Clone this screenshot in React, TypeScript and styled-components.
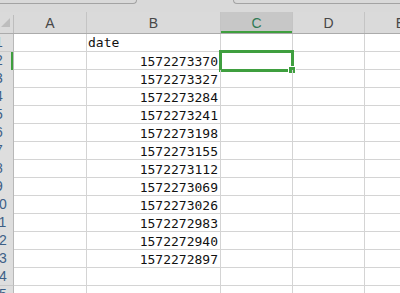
import React from "react";
import styled, { createGlobalStyle } from "styled-components";

const GlobalStyle = createGlobalStyle`
  html, body {
    margin: 0;
    padding: 0;
    width: 400px;
    height: 293px;
    overflow: hidden;
    background: #ffffff;
  }
`;

const GREEN = "#3f9f3f";
const COLS = "14px 73px 134px 72px 72px 72px";

const Sheet = styled.div`
  width: 400px;
  height: 293px;
  overflow: hidden;
  background: #fff;
`;

const TopBar = styled.div`
  height: 12px;
  display: flex;
  align-items: flex-start;
  background: #d9d9d9;
`;

const FormulaBox = styled.div<{ side: "left" | "right" }>`
  box-sizing: border-box;
  height: 4px;
  border-bottom: 1px solid #a3a3a3;
  ${(p) =>
    p.side === "left"
      ? `width: 137px; border-right: 1px solid #a3a3a3; border-bottom-right-radius: 5px;`
      : `flex: 1; margin-left: 96px; border-left: 1px solid #a3a3a3; border-bottom-left-radius: 5px;`}
`;

const HeaderRow = styled.div`
  display: grid;
  grid-template-columns: ${COLS};
  width: 437px;
  height: 22px;
  box-sizing: border-box;
  border-bottom: 1px solid #ababab;
  background: #dadada;
`;

const Corner = styled.div`
  position: relative;
  box-sizing: border-box;
  border-right: 1px solid #bdbdbd;
  margin-top: 3px;
`;

const CornerTriangle = styled.div`
  position: absolute;
  left: 1px;
  top: 3px;
  width: 0;
  height: 0;
  border-left: 9px solid transparent;
  border-bottom: 9px solid #bdbdbd;
`;

const ColHead = styled.div<{ active?: boolean }>`
  box-sizing: border-box;
  display: flex;
  align-items: center;
  justify-content: center;
  border-right: 1px solid #c4c4c4;
  font-family: "Liberation Sans", Arial, sans-serif;
  font-size: 14px;
  color: ${(p) => (p.active ? "#2f7a55" : "#474747")};
  background: ${(p) => (p.active ? "#c7c7c7" : "transparent")};
  box-shadow: ${(p) => (p.active ? `inset 0 -2px 0 ${GREEN}` : "none")};
  padding-top: 1px;
`;

const Row = styled.div`
  display: grid;
  grid-template-columns: ${COLS};
  width: 437px;
  height: 18px;
  box-sizing: border-box;
  border-bottom: 1px solid #d4d4d4;
`;

const RowHead = styled.div<{ active?: boolean }>`
  box-sizing: border-box;
  display: flex;
  justify-content: flex-end;
  overflow: hidden;
  background: #dedede;
  border-right: 1px solid #b8b8b8;
  box-shadow: ${(p) => (p.active ? `inset -2px 0 0 ${GREEN}` : "none")};
  margin-bottom: -1px;
  border-bottom: 1px solid #c9c9c9;
`;

const RowNumber = styled.span`
  flex: 0 0 28px;
  text-align: center;
  font-family: "Liberation Sans", Arial, sans-serif;
  font-size: 14px;
  line-height: 17px;
  color: #3d5f86;
`;

const Cell = styled.div<{ align?: "left" | "right" }>`
  position: relative;
  box-sizing: border-box;
  border-right: 1px solid #d4d4d4;
  font-family: "DejaVu Sans Mono", "Liberation Mono", monospace;
  font-size: 13px;
  line-height: 17px;
  color: #111;
  white-space: nowrap;
  text-align: ${(p) => p.align ?? "left"};
  padding: ${(p) => (p.align === "right" ? "1px 2px 0 0" : "0 0 0 1px")};
`;

const Selection = styled.div`
  position: absolute;
  left: -2px;
  top: -2px;
  right: -2px;
  bottom: -2px;
  border: 3px solid ${GREEN};
  pointer-events: none;
`;

const FillHandle = styled.div`
  position: absolute;
  right: -5px;
  bottom: -5px;
  width: 6px;
  height: 6px;
  background: ${GREEN};
  border: 1px solid #fff;
`;

const values = [
  1572273370, 1572273327, 1572273284, 1572273241, 1572273198, 1572273155,
  1572273112, 1572273069, 1572273026, 1572272983, 1572272940, 1572272897,
];

const letters = ["A", "B", "C", "D", "E"];

export default function App() {
  const rows = Array.from({ length: 15 }, (_, i) => i + 1);
  return (
    <Sheet>
      <GlobalStyle />
      <TopBar>
        <FormulaBox side="left" />
        <FormulaBox side="right" />
      </TopBar>
      <HeaderRow>
        <Corner>
          <CornerTriangle />
        </Corner>
        {letters.map((l) => (
          <ColHead key={l} active={l === "C"}>
            {l}
          </ColHead>
        ))}
      </HeaderRow>
      {rows.map((r) => {
        const b = r === 1 ? "date" : values[r - 2];
        return (
          <Row key={r}>
            <RowHead active={r === 2}>
              <RowNumber>{r}</RowNumber>
            </RowHead>
            <Cell />
            <Cell align={r === 1 ? "left" : "right"}>{b ?? ""}</Cell>
            <Cell>
              {r === 2 && (
                <Selection>
                  <FillHandle />
                </Selection>
              )}
            </Cell>
            <Cell />
            <Cell />
          </Row>
        );
      })}
    </Sheet>
  );
}
